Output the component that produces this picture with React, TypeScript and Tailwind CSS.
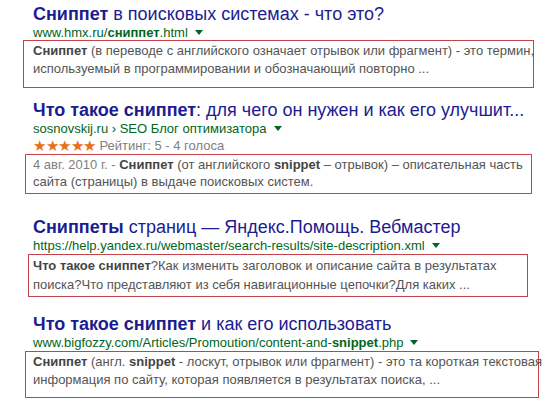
const Tri = () => (
  <span className="mb-[2px] ml-[7px] inline-block h-0 w-0 border-x-[4px] border-t-[5px] border-x-transparent border-t-[#006621] align-middle" />
);

export default function App() {
  return (
    <div className="h-[411px] w-[558px] overflow-hidden bg-white pl-[33px] font-['Liberation_Sans',Arial,sans-serif]">
      {/* result 1 */}
      <div className="pt-[3px]">
        <div className="whitespace-nowrap text-[18px] leading-[22px] text-[#1c1c91]">
          <b>Сниппет</b> в поисковых системах - что это?
        </div>
        <div className="whitespace-nowrap text-[13px] leading-[16px] text-[#006621]">
          www.hmx.ru/<b>сниппет</b>.html
          <Tri />
        </div>
        <div className="-ml-[10px] mt-[-1px] h-[48px] w-[511px] whitespace-nowrap border border-[#c4424a] pl-[9px] pt-[1px] text-[13px] leading-[18px] text-[#545454]">
          <b className="text-[#444]">Сниппет</b> (в переводе с английского означает отрывок или фрагмент) - это термин,
          <br />
          используемый в программировании и обозначающий повторно ...
        </div>
      </div>

      {/* result 2 */}
      <div className="pt-[11px]">
        <div className="whitespace-nowrap text-[18px] leading-[22px] text-[#1c1c91]">
          <b>Что такое сниппет</b>: для чего он нужен и как его улучшит...
        </div>
        <div className="whitespace-nowrap text-[13px] leading-[16px] text-[#006621]">
          sosnovskij.ru › SEO Блог оптимизатора
          <Tri />
        </div>
        <div className="flex items-center whitespace-nowrap text-[13px] leading-[17px] text-[#808080]">
          <span className="mr-[4px] text-[15px] tracking-[-0.5px] text-[#e7711b]">★★★★★</span>
          Рейтинг: 5 - 4 голоса
        </div>
        <div className="-ml-[8px] h-[40px] w-[507px] whitespace-nowrap border border-[#c4424a] pl-[7px] pt-[1px] text-[13px] leading-[17px] text-[#545454]">
          <span className="text-[#808080]">4 авг. 2010 г. - </span>
          <b className="text-[#444]">Сниппет</b> (от английского <b className="text-[#444]">snippet</b> – отрывок) – описательная часть
          <br />
          сайта (страницы) в выдаче поисковых систем.
        </div>
      </div>

      {/* result 3 */}
      <div className="pt-[22px]">
        <div className="whitespace-nowrap text-[18px] leading-[22px] text-[#1c1c91]">
          <b>Сниппеты</b> страниц — Яндекс.Помощь. Вебмастер
        </div>
        <div className="whitespace-nowrap text-[13px] leading-[16px] text-[#006621]">
          https://help.yandex.ru/webmaster/search-results/site-description.xml
          <Tri />
        </div>
        <div className="-ml-[5px] h-[43px] w-[500px] whitespace-nowrap border border-[#c4424a] pl-[4px] pt-[1px] text-[13px] leading-[19px] text-[#545454]">
          <b className="text-[#444]">Что такое сниппет</b>?Как изменить заголовок и описание сайта в результатах
          <br />
          поиска?Что представляют из себя навигационные цепочки?Для каких ...
        </div>
      </div>

      {/* result 4 */}
      <div className="pt-[16px]">
        <div className="whitespace-nowrap text-[18px] leading-[22px] text-[#1c1c91]">
          <b>Что такое сниппет</b> и как его использовать
        </div>
        <div className="whitespace-nowrap text-[13px] leading-[16px] text-[#006621]">
          www.bigfozzy.com/Articles/Promoution/content-and-<b>snippet</b>.php
          <Tri />
        </div>
        <div className="-ml-[8px] h-[47px] w-[514px] whitespace-nowrap border border-[#c4424a] pl-[7px] pt-[1px] text-[13px] leading-[18px] text-[#545454]">
          <b className="text-[#444]">Сниппет</b> (англ. <b className="text-[#444]">snippet</b> - лоскут, отрывок или фрагмент) - это та короткая текстовая
          <br />
          информация по сайту, которая появляется в результатах поиска, ...
        </div>
      </div>
    </div>
  );
}
